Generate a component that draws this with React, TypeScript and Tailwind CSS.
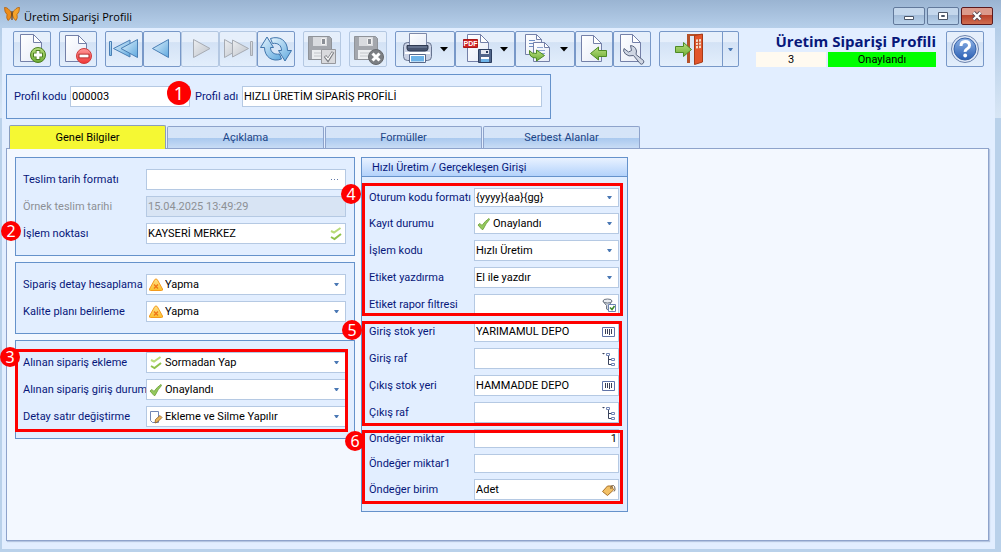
import { useState } from 'react';
import type { ReactNode } from 'react';
import clsx from 'clsx';

const TABS = ['Genel Bilgiler', 'Açıklama', 'Formüller', 'Serbest Alanlar'];

/* ---------- icons ---------- */

function Svg({ w = 32, h = 32, children }: { w?: number; h?: number; children: ReactNode }) {
  return (
    <svg width={w} height={h} viewBox={`0 0 ${w} ${h}`} className="shrink-0" aria-hidden="true">
      {children}
    </svg>
  );
}

function Gradients() {
  return (
    <svg width="0" height="0" className="absolute" aria-hidden="true">
      <defs>
        <linearGradient id="blue" x1="0" y1="0" x2="1" y2="1">
          <stop offset="0" stopColor="#e4f4fd" />
          <stop offset="1" stopColor="#5fa8de" />
        </linearGradient>
        <linearGradient id="grey" x1="0" y1="0" x2="1" y2="1">
          <stop offset="0" stopColor="#eceef1" />
          <stop offset="1" stopColor="#bfc4cb" />
        </linearGradient>
        <linearGradient id="paper" x1="0" y1="0" x2="1" y2="1">
          <stop offset="0" stopColor="#ffffff" />
          <stop offset="1" stopColor="#e6ebf7" />
        </linearGradient>
        <linearGradient id="green" x1="0" y1="0" x2="0" y2="1">
          <stop offset="0" stopColor="#b9e07f" />
          <stop offset="1" stopColor="#6cab34" />
        </linearGradient>
        <linearGradient id="red" x1="0" y1="0" x2="0" y2="1">
          <stop offset="0" stopColor="#ff9a9a" />
          <stop offset="1" stopColor="#f03434" />
        </linearGradient>
        <linearGradient id="help" x1="0" y1="0" x2="0" y2="1">
          <stop offset="0" stopColor="#8fb3e6" />
          <stop offset="1" stopColor="#2a5fb4" />
        </linearGradient>
        <linearGradient id="orange" x1="0" y1="0" x2="0" y2="1">
          <stop offset="0" stopColor="#ffe08a" />
          <stop offset="1" stopColor="#fbc02c" />
        </linearGradient>
      </defs>
    </svg>
  );
}

function Sheet({ x = 4, y = 1, w = 22, h = 27, fold = 8 }) {
  return (
    <g stroke="#7480a8" strokeLinejoin="round">
      <path d={`M${x + 0.5} ${y + 0.5}h${w - fold}l${fold} ${fold}v${h - fold}h${-w}z`} fill="url(#paper)" />
      <path d={`M${x + 0.5 + w - fold} ${y + 0.5}v${fold}h${fold}z`} fill="#ffffff" />
    </g>
  );
}

function Floppy() {
  return (
    <g>
      <path d="M2.5 3.5h21l2 2v21h-23z" fill="#a4a7ad" stroke="#8f9399" />
      <path d="M7 4h14v9H7z" fill="#d9dbdf" />
      <path d="M15.5 5.5h4v6h-4z" fill="#8b8f96" stroke="#f1f1f1" />
      <path d="M6 17h16v9H6z" fill="#eceef0" />
      <path d="M8 20h12M8 23h12" stroke="#c3c6ca" />
    </g>
  );
}

function NewIcon() {
  return (
    <Svg>
      <Sheet x={4} y={1} w={21} />
      <circle cx="22" cy="22" r="7.5" fill="url(#green)" stroke="#4d7f22" />
      <path d="M22 17v10M17 22h10" stroke="#4d7f22" strokeWidth="4.6" />
      <path d="M22 18v8M18 22h8" stroke="#fff" strokeWidth="2.8" />
    </Svg>
  );
}

function DeleteIcon() {
  return (
    <Svg>
      <Sheet x={3} y={2} w={21} h={26} />
      <circle cx="22" cy="23" r="7.5" fill="url(#red)" stroke="#d03a3a" />
      <path d="M16.5 23h11" stroke="#b02525" strokeWidth="4.6" />
      <path d="M17.5 23h9" stroke="#fff" strokeWidth="2.8" />
    </Svg>
  );
}

function FirstIcon() {
  return (
    <Svg>
      <g fill="url(#blue)" stroke="#4a7fb5" strokeLinejoin="round">
        <path d="M1.5 8.5h2v14h-2z" />
        <path d="M5.5 15.5L22 7v17z" />
        <path d="M13 15.5L29.5 6.500v18z" />
      </g>
    </Svg>
  );
}

function PrevIcon() {
  return (
    <Svg>
      <path d="M6.5 15.5l16-9v18z" fill="url(#blue)" stroke="#4a7fb5" strokeLinejoin="round" />
    </Svg>
  );
}

function NextIcon() {
  return (
    <Svg>
      <path d="M26 15.5l-16.5-9v18z" fill="url(#grey)" stroke="#a6abb3" strokeLinejoin="round" />
    </Svg>
  );
}

function LastIcon() {
  return (
    <Svg>
      <g fill="url(#grey)" stroke="#a6abb3" strokeLinejoin="round">
        <path d="M2.5 6.5v18l16-9z" />
        <path d="M10.5 7v17l16-8.5z" />
        <path d="M28.5 8.5h2v14h-2z" />
      </g>
    </Svg>
  );
}

function RefreshIcon() {
  return (
    <Svg>
      <g fill="url(#blue)" stroke="#3f74ab" strokeLinejoin="round">
        <path d="M7 4l6.500 10.500H10.500C10.500 19 14 22 19.500 21l2 5C12.500 29.500 4.500 24 4.500 14.500H.5z" />
        <path d="M25 28l-6.500-10.500H21.500C21.500 12.500 18 9.500 12.500 10.500l-2-5C19.500 2.500 27.500 7.500 27.500 17.500h4z" />
      </g>
    </Svg>
  );
}

function SaveIcon() {
  return (
    <Svg>
      <Floppy />
      <path d="M15.500 16.500h14v14h-14z" fill="#d9dadd" stroke="#97999e" />
      <path d="M19 23l3 4 5-8" fill="none" stroke="#7c7f84" strokeWidth="3" />
      <path d="M19.500 23.500l2.500 3 4.500-7" fill="none" stroke="#fff" strokeWidth="1.2" />
    </Svg>
  );
}

function SaveCancelIcon() {
  return (
    <Svg>
      <Floppy />
      <circle cx="24" cy="24" r="7.500" fill="#7c7f83" stroke="#66696d" />
      <path d="M20.500 20.500l7 7M27.500 20.500l-7 7" stroke="#fff" strokeWidth="3" />
    </Svg>
  );
}

function PrintIcon() {
  return (
    <Svg>
      <path d="M1.500 13.500q0-4 4-4h20q4 0 4 4v10q0 4-4 4h-20q-4 0-4-4z" fill="#c9d1e4" stroke="#66738f" />
      <path d="M7.500.5h17v12h-17z" fill="url(#paper)" stroke="#7d88a8" />
      <path d="M5 12.500h21v3q0 2.500-3 2.500H8q-3 0-3-2.500z" fill="#46536f" stroke="#2f3a52" />
      <path d="M6 14h19" stroke="#7f8da9" />
      <path d="M3 20h25" stroke="#fff" strokeWidth="2" />
      <path d="M7.500 21.500h16v8h-16z" fill="#fff" stroke="#58688a" />
      <path d="M9 23h13v5.500H9z" fill="#6db3e8" />
    </Svg>
  );
}

function PdfIcon() {
  return (
    <Svg>
      <Sheet x={5} y={1} w={21} h={27} />
      <path d="M1.500 6.500h14v8h-14z" fill="#cf2424" stroke="#a81818" />
      <text x="8.500" y="13" textAnchor="middle" fontFamily="Liberation Sans" fontWeight="700" fontSize="7" fill="#fff">PDF</text>
      <path d="M16.500 16.500h13v13h-13z" fill="#50658a" stroke="#2c3d5f" />
      <path d="M19 17h8v4h-8z" fill="#e3e8f0" />
      <path d="M24 18h2v2h-2z" fill="#2c3d5f" />
      <path d="M19 24h8v5h-8z" fill="#fff" />
      <path d="M19 26h8v3h-8z" fill="#6db3e8" />
    </Svg>
  );
}

function CopyIcon() {
  return (
    <Svg>
      <Sheet x={3} y={1} w={16} h={20} fold={5} />
      <path d="M7 7.500h6M7 10.500h7M7 13.500h4" stroke="#6f8fc4" />
      <Sheet x={11} y={9} w={16} h={19} fold={5} />
      <path d="M15 14.500h6M15 17.500h8M18 20.500h5" stroke="#8ea6d2" />
      <path d="M7.500 17.500q2 3.500 7 3v-3.500l8 5.500-8 5.500v-3q-8 0-7-7.500z" fill="url(#green)" stroke="#4d8a25" strokeLinejoin="round" />
    </Svg>
  );
}

function ImportIcon() {
  return (
    <Svg>
      <Sheet x={3} y={2} w={20} h={26} />
      <path d="M12.500 20.500l8-6.500v3.500h8v6h-8v3.500z" fill="url(#green)" stroke="#4d8a25" strokeLinejoin="round" />
    </Svg>
  );
}

function WrenchIcon() {
  return (
    <Svg>
      <Sheet x={4} y={1} w={20} h={27} />
      <path
        d="M8 15.500l4.500 3.500 3-1.500-1-5q5 .5 6 5.500l-.5 3.500 7.500 6q1 1.500-.5 3t-3 0l-6.500-8q-5 1.500-8-1.500t-1.500-5.500z"
        fill="#cfd6e3"
        stroke="#5a6580"
        strokeLinejoin="round"
      />
    </Svg>
  );
}

function ExitIcon() {
  return (
    <Svg>
      <path d="M12 1h16v2H15v27h-3z" fill="#b5522a" />
      <path d="M15 3h6v26h-6z" fill="#dbe8f7" />
      <path d="M19.500 2.500l8-1.500v28l-8 2.500z" fill="#e2552b" stroke="#a83a16" />
      <path d="M21 6.500l5-.5v9l-5 .5z" fill="#f5ddc8" />
      <path d="M23.500 6v9.500M21 9.500l5-.5M21 12.500l5-.5" stroke="#c9542d" />
      <path d="M.5 13.500h8v-4l8 7-8 7v-4h-8z" fill="url(#green)" stroke="#4d8a25" strokeLinejoin="round" />
    </Svg>
  );
}

function HelpIcon() {
  return (
    <Svg>
      <circle cx="16" cy="16" r="13.500" fill="#dfe8f7" stroke="#6c83ae" />
      <circle cx="16" cy="16" r="11" fill="url(#help)" stroke="#3763a8" />
      <path d="M12 13q0-4.500 4.200-4.500T20.500 12.500q0 2-2.200 3.200T16.200 18.800" fill="none" stroke="#fff" strokeWidth="3" />
      <circle cx="16.200" cy="22.500" r="1.900" fill="#fff" />
    </Svg>
  );
}

function Butterfly() {
  return (
    <Svg w={16} h={16}>
      <path d="M7.500 7Q4 1 .5 1.500q0 5 2.500 7Q2 12 4 14.500 7 13 7.500 9z" fill="#ee8d1a" stroke="#b0600f" strokeWidth=".8" />
      <path d="M8.500 7Q12 1 15.500 1.500q0 5-2.500 7 1 3.500-1 6Q9 13 8.500 9z" fill="#f5a42a" stroke="#b0600f" strokeWidth=".8" />
      <path d="M8 5v9" stroke="#5b3a14" strokeWidth="1.2" />
    </Svg>
  );
}

function WarningIcon() {
  return (
    <Svg w={14} h={14}>
      <path d="M7 1q1 0 1.500 1l5 9q.5 1.500-1 1.500h-11q-1.500 0-1-1.500l5-9Q6 1 7 1z" fill="url(#orange)" stroke="#f39a1c" />
      <path d="M5 6.500l4 4M9 6.500l-4 4" stroke="#ee7414" strokeWidth="1.3" />
    </Svg>
  );
}

function DoubleCheckIcon() {
  return (
    <Svg w={14} h={14}>
      <g fill="none" strokeWidth="2">
        <path d="M2 4l3 1.500L11.500 1" stroke="#b9dc78" />
        <path d="M2 10l3.500 2L12 7" stroke="#8fc24a" />
      </g>
    </Svg>
  );
}

function CheckIcon() {
  return (
    <Svg w={14} h={14}>
      <path d="M1 8l2-1.500 2 2Q8 4 12 1.500l.5 1Q9 6 6 12.500H5z" fill="#94c95c" stroke="#7aaa4a" />
    </Svg>
  );
}

function EditPageIcon() {
  return (
    <Svg w={14} h={14}>
      <path d="M1.500 1.500h8v11h-6l-2-2z" fill="#fff" stroke="#7286b5" />
      <path d="M6 13l.5-3.500 4.500-4 2 2-4.500 4.500z" fill="#e8b45c" stroke="#8d5a20" strokeWidth=".8" />
    </Svg>
  );
}

function FilterIcon() {
  return (
    <Svg w={14} h={14}>
      <path d="M1 3.500l3.500 4v3.500l2.500 1.500V7.500l3-4.500" fill="#cfd5de" stroke="#6d7684" />
      <ellipse cx="5.500" cy="3" rx="4.500" ry="2" fill="#e9ecf1" stroke="#6d7684" />
      <path d="M6.500 6.500h7v7h-7z" fill="#fff" stroke="#6d84b3" />
      <path d="M8 9.500l2 2 2.500-3.500" fill="none" stroke="#3d8a2a" strokeWidth="1.5" />
    </Svg>
  );
}

function BarcodeIcon() {
  return (
    <Svg w={14} h={14}>
      <path d="M.5 2.500h12v9H.5z" fill="#fff" stroke="#5f73a8" />
      <path d="M3.500 4v5M5.500 4v5M7.500 4v6M9.500 4v5" stroke="#3a3f57" />
    </Svg>
  );
}

function TreeIcon() {
  return (
    <Svg w={14} h={14}>
      <path d="M0 1h3L1.500 2.500z" fill="#39435c" />
      <path d="M6.500 4v8.500H9M6.500 7.500H9" fill="none" stroke="#39435c" />
      <path d="M4.500 1.500h3v2h-3zM9.500 6.500h3v2h-3zM9.500 11.500h3v2h-3z" fill="#fff" stroke="#6f84b5" />
    </Svg>
  );
}

function TagIcon() {
  return (
    <Svg w={14} h={14}>
      <path d="M.5 8.500l5-5.500h4.500l1.500 4-6 5.500z" fill="#f2c066" stroke="#a8712a" strokeLinejoin="round" />
      <path d="M9 6q-1-3 1.500-3.500T13 7l-1 1.500" fill="none" stroke="#6d5a45" />
    </Svg>
  );
}

function DotsIcon() {
  return (
    <Svg w={14} h={14}>
      <path d="M2 6h1v1H2zM5 6h1v1H5zM8 6h1v1H8z" fill="#5f78a8" />
    </Svg>
  );
}

/* ---------- form parts ---------- */

function Arrow({ large = false }: { large?: boolean }) {
  return large ? (
    <svg width="8" height="5" viewBox="0 0 8 5" aria-hidden="true"><path d="M0 0h8L4 4.500z" fill="#000" /></svg>
  ) : (
    <svg width="5" height="3" viewBox="0 0 5 3" className="shrink-0" aria-hidden="true"><path d="M0 0h5L3 3H2z" fill="#4a78b4" /></svg>
  );
}

type FieldProps = {
  id: string;
  label: string;
  value: string;
  kind?: 'text' | 'select';
  icon?: ReactNode;
  action?: ReactNode;
  disabled?: boolean;
  short?: boolean;
  numeric?: boolean;
  narrow?: boolean;
};

function Field({ id, label, value, kind = 'text', icon, action, disabled, short, numeric, narrow }: FieldProps) {
  return (
    <div className="flex items-center">
      <label
        htmlFor={id}
        className={clsx('shrink-0 whitespace-nowrap', narrow ? 'w-[105px]' : 'w-[123px]', disabled ? 'text-[#8d9095]' : 'text-[#07177a]')}
      >
        {label}
      </label>
      <div
        className={clsx(
          'flex min-w-0 flex-1 items-center border border-[#b5c9e3]',
          short ? 'h-[19px]' : 'h-[21px]',
          disabled ? 'bg-[#d8e4f4]' : 'bg-white',
        )}
      >
        {icon && <span className="ml-0.5 mr-px">{icon}</span>}
        {kind === 'select' ? (
          <>
            <select id={id} className="h-full min-w-0 flex-1 appearance-none bg-transparent pl-px text-black outline-none">
              <option>{value}</option>
            </select>
            <span className="pointer-events-none mr-1.5 flex"><Arrow /></span>
          </>
        ) : (
          <input
            id={id}
            defaultValue={value}
            disabled={disabled}
            className={clsx(
              'h-full w-0 min-w-0 flex-1 bg-transparent px-px outline-none',
              disabled ? 'text-[#8d9095]' : 'text-black',
              numeric && 'text-right',
            )}
          />
        )}
        {action && (
          <button type="button" aria-label={`${label} seç`} className="mr-0.5 flex h-full items-center">
            {action}
          </button>
        )}
      </div>
    </div>
  );
}

function Badge({ n, className }: { n: number; className: string }) {
  return (
    <span
      className={clsx(
        "absolute z-20 flex items-center justify-center rounded-full bg-[#fe0000] font-['Noto_Sans',sans-serif] text-white",
        className,
      )}
    >
      {n}
    </span>
  );
}

function Outline({ className }: { className: string }) {
  return <div className={clsx('pointer-events-none absolute z-10 border-3 border-[#fe0000]', className)} />;
}

function Group({ children }: { children: ReactNode }) {
  return (
    <section className="relative flex flex-col gap-1.5 border border-[#6592cb] bg-[#e2eeff] py-[11px] pl-[7px] pr-2">
      {children}
    </section>
  );
}

/* ---------- toolbar ---------- */

type ToolButtonProps = {
  label: string;
  children: ReactNode;
  size?: string;
  menu?: boolean;
  off?: boolean;
  className?: string;
};

function ToolButton({ label, children, size = 'w-[38px]', menu, off, className }: ToolButtonProps) {
  return (
    <button
      type="button"
      aria-label={label}
      disabled={off}
      className={clsx(
        'flex h-9 shrink-0 items-center justify-center gap-1.5 rounded-xs border bg-linear-to-b from-[#e6effb] from-30% via-[#d3e2f5] via-31% to-[#e3eefc]',
        menu ? 'w-[60px]' : size,
        off ? 'border-[#b4c8e2]' : 'border-[#7898c8]',
        className,
      )}
    >
      {children}
      {menu && <Arrow large />}
    </button>
  );
}

function Toolbar() {
  return (
    <div className="flex items-start px-[11px] pt-[3px]">
      <ToolButton label="Yeni"><NewIcon /></ToolButton>
      <ToolButton label="Sil" className="ml-2"><DeleteIcon /></ToolButton>
      <ToolButton label="İlk kayıt" className="ml-2"><FirstIcon /></ToolButton>
      <ToolButton label="Önceki kayıt"><PrevIcon /></ToolButton>
      <ToolButton label="Sonraki kayıt" off><NextIcon /></ToolButton>
      <ToolButton label="Son kayıt" off><LastIcon /></ToolButton>
      <ToolButton label="Yenile"><RefreshIcon /></ToolButton>
      <ToolButton label="Kaydet" off className="ml-2"><SaveIcon /></ToolButton>
      <ToolButton label="Vazgeç" off className="ml-2"><SaveCancelIcon /></ToolButton>
      <ToolButton label="Yazdır" menu className="ml-2"><PrintIcon /></ToolButton>
      <ToolButton label="PDF kaydet" menu><PdfIcon /></ToolButton>
      <ToolButton label="Kopyala" menu><CopyIcon /></ToolButton>
      <ToolButton label="Al"><ImportIcon /></ToolButton>
      <ToolButton label="Ayarlar"><WrenchIcon /></ToolButton>
      <ToolButton label="Çıkış" size="w-16" className="ml-2 rounded-r-none"><ExitIcon /></ToolButton>
      <ToolButton label="Çıkış seçenekleri" size="w-[17px]" className="-ml-px rounded-l-none"><Arrow /></ToolButton>
      <div className="ml-auto flex w-[180px] flex-col">
        <h1 className="h-[21px] whitespace-nowrap text-right font-['Open_Sans',sans-serif] text-[15px]/[21px] font-bold text-[#07177a]">
          Üretim Siparişi Profili
        </h1>
        <div className="flex gap-0.5 text-center leading-[15px]">
          <span className="w-[70px] bg-[#fffaf0]">3</span>
          <span className="flex-1 bg-[#00ff00]">Onaylandı</span>
        </div>
      </div>
      <ToolButton label="Yardım" className="ml-2.5"><HelpIcon /></ToolButton>
    </div>
  );
}

function TitleBar() {
  const frame = 'flex h-[18px] w-8 items-center justify-center rounded-xs border';
  const plain = 'border-[#62799b] bg-linear-to-b from-[#c4d7ec] from-45% via-[#a3bcd9] via-46% to-[#b9d2eb]';
  return (
    <header className="flex h-7 items-center bg-linear-to-b from-[#9ab4d2] to-[#b6cfea] pl-1 pr-2">
      <Butterfly />
      <span className="ml-1 mt-1.5 font-['Open_Sans',sans-serif] text-[11px]/4 text-black">Üretim Siparişi Profili</span>
      <div className="ml-auto mt-1 flex gap-0.5">
        <button type="button" aria-label="Simge durumuna küçült" className={clsx(frame, plain)}>
          <Svg w={12} h={10}><path d="M1.500 5.500h9v3h-9z" fill="#fff" stroke="#4a5567" /></Svg>
        </button>
        <button type="button" aria-label="Ekranı kapla" className={clsx(frame, plain)}>
          <Svg w={12} h={10}><path d="M1.500 1.500h9v7h-9zM4.500 4.500h3v1h-3z" fill="#fff" stroke="#4a5567" /></Svg>
        </button>
        <button type="button" aria-label="Kapat" className={clsx(frame, 'border-[#5b1a1e] bg-linear-to-b from-[#dc9a8c] from-45% via-[#b9412b] via-46% to-[#cf6d50]')}>
          <Svg w={12} h={10}>
            <path d="M2.500 1.500l7 7M9.500 1.500l-7 7" stroke="#5a4a55" strokeWidth="4" />
            <path d="M2.500 1.500l7 7M9.500 1.500l-7 7" stroke="#fff" strokeWidth="2.2" />
          </Svg>
        </button>
      </div>
    </header>
  );
}

export default function App() {
  const [active, setActive] = useState(TABS[0]);

  return (
    <div className="flex min-h-screen flex-col bg-[linear-gradient(#b4cde8_28px,#d8e6f5_118px,#b9d1ea_118px)] font-[Roboto,'DejaVu_Sans',sans-serif] text-[11px] leading-[15px]">
      <Gradients />
      <TitleBar />
      <main className="mb-[3px] ml-0.5 mr-1.5 flex flex-1 flex-col bg-[#e2eeff]">
        <Toolbar />

        {/* Profile key */}
        <section className="relative ml-1 mt-[7px] flex h-[45px] w-[545px] items-center border border-[#6592cb] pl-[7px] pr-2">
          <label htmlFor="code" className="w-14 whitespace-nowrap text-[#07177a]">Profil kodu</label>
          <input id="code" defaultValue="000003" className="h-[21px] w-[120px] border border-[#b5c9e3] bg-white px-px outline-none" />
          <label htmlFor="name" className="ml-[5px] w-[47px] whitespace-nowrap text-[#07177a]">Profil adı</label>
          <input id="name" defaultValue="HIZLI ÜRETİM SİPARİŞ PROFİLİ" className="h-[21px] min-w-0 flex-1 border border-[#b5c9e3] bg-white px-px outline-none" />
          <Badge n={1} className="left-40 top-1.5 size-6 text-lg" />
        </section>

        {/* Tabs */}
        <div role="tablist" className="relative z-10 ml-[7px] mt-[5px] flex h-6 items-end gap-px">
          {TABS.map((tab) => (
            <button
              key={tab}
              type="button"
              role="tab"
              aria-selected={tab === active}
              onClick={() => setActive(tab)}
              className={clsx(
                'w-[157px] rounded-t-xs border',
                tab === active
                  ? '-mb-px h-6 border-[#8a9dbd] border-b-0 bg-[#f5f833] text-black'
                  : 'h-[22px] border-[#8ea3cb] border-b-0 bg-linear-to-b from-[#d5e4f8] from-50% via-[#a9c8ee] via-52% to-[#c8dcf5] text-[#1c4587]',
              )}
            >
              {tab}
            </button>
          ))}
        </div>

        <div className="mb-2 ml-1 mr-1.5 flex flex-1 items-start gap-1.5 border border-[#8ea3cb] bg-[#f3f8ff] px-2 pb-7 pt-2 shadow-[1px_1px_1px_#b5c6e2]">
          <div className="flex w-[340px] shrink-0 flex-col gap-1.5">
            <Group>
              <Field id="dateFormat" label="Teslim tarih formatı" value="" action={<DotsIcon />} />
              <Field id="sampleDate" label="Örnek teslim tarihi" value="15.04.2025 13:49:29" disabled />
              <Field id="place" label="İşlem noktası" value="KAYSERİ MERKEZ" action={<DoubleCheckIcon />} />
              <Badge n={2} className="-left-[15px] top-[63px] size-5 text-base" />
            </Group>
            <Group>
              <Field id="detail" label="Sipariş detay hesaplama" value="Yapma" kind="select" icon={<WarningIcon />} />
              <Field id="quality" label="Kalite planı belirleme" value="Yapma" kind="select" icon={<WarningIcon />} />
            </Group>
            <Group>
              <Field id="orderAdd" label="Alınan sipariş ekleme" value="Sormadan Yap" kind="select" icon={<DoubleCheckIcon />} />
              <Field id="orderState" label="Alınan sipariş giriş durum" value="Onaylandı" kind="select" icon={<CheckIcon />} />
              <Field id="rowChange" label="Detay satır değiştirme" value="Ekleme ve Silme Yapılır" kind="select" icon={<EditPageIcon />} />
              <Outline className="-left-px right-1.5 top-2 bottom-1.5" />
              <Badge n={3} className="-left-4 top-1.5 size-5 text-base" />
            </Group>
          </div>

          <section className="w-[267px] shrink-0 border border-[#6592cb] bg-[#e2eeff]">
            <h2 className="h-[19px] border-b border-[#6592cb] bg-linear-to-b from-[#e9f2ff] to-[#b3d2fb] pl-2.5 leading-[19px] text-[#07177a]">
              Hızlı Üretim / Gerçekleşen Girişi
            </h2>
            <div className="flex flex-col gap-1.5 pb-[11px] pl-[7px] pr-2 pt-[11px]">
              <div className="relative flex flex-col gap-1.5">
                <Field narrow short id="session" label="Oturum kodu formatı" value="{yyyy}{aa}{gg}" kind="select" />
                <Field narrow id="state" label="Kayıt durumu" value="Onaylandı" kind="select" icon={<CheckIcon />} />
                <Field narrow id="operation" label="İşlem kodu" value="Hızlı Üretim" kind="select" />
                <Field narrow id="print" label="Etiket yazdırma" value="El ile yazdır" kind="select" />
                <Field narrow id="report" label="Etiket rapor filtresi" value="" action={<FilterIcon />} />
                <Outline className="-left-[7px] -right-1 -bottom-px -top-[5px]" />
                <Badge n={4} className="-left-7 -top-1 size-5 text-base" />
              </div>
              <div className="relative flex flex-col gap-1.5">
                <Field narrow id="inStock" label="Giriş stok yeri" value="YARIMAMUL DEPO" action={<BarcodeIcon />} />
                <Field narrow id="inShelf" label="Giriş raf" value="" action={<TreeIcon />} />
                <Field narrow id="outStock" label="Çıkış stok yeri" value="HAMMADDE DEPO" action={<BarcodeIcon />} />
                <Field narrow id="outShelf" label="Çıkış raf" value="" action={<TreeIcon />} />
                <Outline className="-left-[7px] -right-[3px] -bottom-[3px] top-0" />
                <Badge n={5} className="-left-[27px] -top-px size-5 text-base" />
              </div>
              <div className="relative flex flex-col gap-1.5">
                <Field narrow short numeric id="qty" label="Öndeğer miktar" value="1" />
                <Field narrow short id="qty1" label="Öndeğer miktar1" value="" />
                <Field narrow id="unit" label="Öndeğer birim" value="Adet" action={<TagIcon />} />
                <Outline className="-left-[7px] -right-1 -bottom-1 top-px" />
                <Badge n={6} className="-left-6 top-0.5 size-5 text-base" />
              </div>
            </div>
          </section>
        </div>
      </main>
    </div>
  );
}
